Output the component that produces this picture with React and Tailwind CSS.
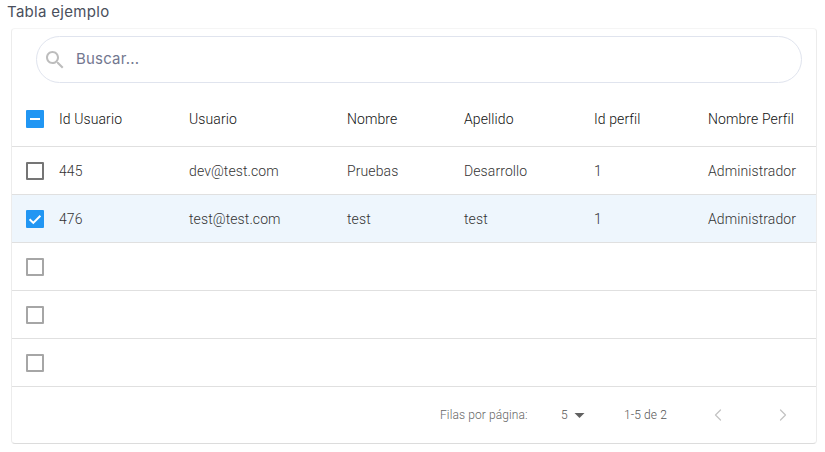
import { ChevronLeft, ChevronRight } from 'lucide-react'

const COLS = ['Id Usuario', 'Usuario', 'Nombre', 'Apellido', 'Id perfil', 'Nombre Perfil']
const GRID = 'grid grid-cols-[47px_130px_158px_117px_130px_114px_1fr] items-center'

const ROWS = [
  { cells: ['445', 'dev@test.com', 'Pruebas', 'Desarrollo', '1', 'Administrador'], box: 'dark' },
  { cells: ['476', 'test@test.com', 'test', 'test', '1', 'Administrador'], box: 'checked' },
  { cells: [], box: 'empty' },
  { cells: [], box: 'empty' },
  { cells: [], box: 'empty' },
]

function Box({ kind }) {
  if (kind === 'checked' || kind === 'mixed') {
    return (
      <span className="w-[18px] h-[18px] bg-[#2196f3] rounded-[1px] flex items-center justify-center">
        <svg viewBox="0 0 18 18" className="w-[18px] h-[18px]" fill="none" stroke="#fff" strokeWidth="2">
          {kind === 'checked' ? <path d="M3.6 9.2l3.7 3.7 7.1-7.2" /> : <path d="M4 9h10" />}
        </svg>
      </span>
    )
  }
  return (
    <span className={`w-[18px] h-[18px] border-2 rounded-[1px] ${kind === 'dark' ? 'border-[#757575]' : 'border-[#a6a6a6]'}`} />
  )
}

function Row({ row }) {
  const selected = row.box === 'checked'
  return (
    <div className={`${GRID} h-12 border-b border-[#e0e0e0] ${selected ? 'bg-[#eef6fd]' : ''}`}>
      <div className="pl-[14px] flex items-center"><Box kind={row.box} /></div>
      {row.cells.map((c, i) => (
        <div key={i} className="text-sm font-light tracking-[0.1px] text-[#333333] whitespace-nowrap">{c}</div>
      ))}
    </div>
  )
}

export default function App() {
  return (
    <div className="w-[825px] h-[452px] bg-white overflow-hidden font-['Roboto',sans-serif]">
      <div className="pl-[7px] h-[28px] pt-[3px] text-[15px] leading-[18px] text-[#4a4f5c] font-['Inter',sans-serif] tracking-[0.3px]">Tabla ejemplo</div>

      <div className="ml-[11px] w-[806px] h-[416px] bg-white border border-t-[#f5f5f5] border-x-[#ececec] border-b-[#dcdcdc] rounded-[4px] flex flex-col">
        <div className="pl-[24px] pr-[14px] pt-[7px]">
          <div className="h-[47px] rounded-full border border-[#e0e4ee] flex items-center pl-[6px]">
            <svg viewBox="0 0 24 24" className="w-6 h-6" fill="#bdbdbd">
              <path d="M15.5 14h-.79l-.28-.27C15.41 12.59 16 11.11 16 9.5 16 5.91 13.09 3 9.5 3S3 5.91 3 9.5 5.91 16 9.5 16c1.61 0 3.09-.59 4.23-1.57l.27.28v.79l5 4.99L20.49 19l-4.99-5zm-6 0C7.01 14 5 11.99 5 9.5S7.01 5 9.5 5 14 7.01 14 9.5 11.99 14 9.5 14z" />
            </svg>
            <span className="ml-[9px] text-[15px] text-[#73778f] tracking-[0.2px] font-['Inter',sans-serif]">Buscar...</span>
          </div>
        </div>

        <div className={`${GRID} h-[64px] pt-2 border-b border-[#e0e0e0]`}>
          <div className="pl-[14px] flex items-center"><Box kind="mixed" /></div>
          {COLS.map(c => (
            <div key={c} className="text-sm font-light tracking-[0.1px] text-[#111111] whitespace-nowrap">{c}</div>
          ))}
        </div>

        {ROWS.map((r, i) => <Row key={i} row={r} />)}

        <div className="flex-1 flex items-center text-xs font-light tracking-[0.1px] text-[#666666] pl-[428px]">
          <span className="w-[121px]">Filas por página:</span>
          <span className="w-[13px] text-[#555555]">5</span>
          <svg viewBox="0 0 12 6" className="w-[11px] h-[5px]"><path d="M0 0h12L6 6z" fill="#616161" /></svg>
          <span className="ml-[39px] w-[84px] text-[#555555]">1-5 de 2</span>
          <ChevronLeft size={20} strokeWidth={1.5} className="text-[#c4c4c4]" />
          <ChevronRight size={20} strokeWidth={1.5} className="ml-[45px] text-[#c4c4c4]" />
        </div>
      </div>
    </div>
  )
}
